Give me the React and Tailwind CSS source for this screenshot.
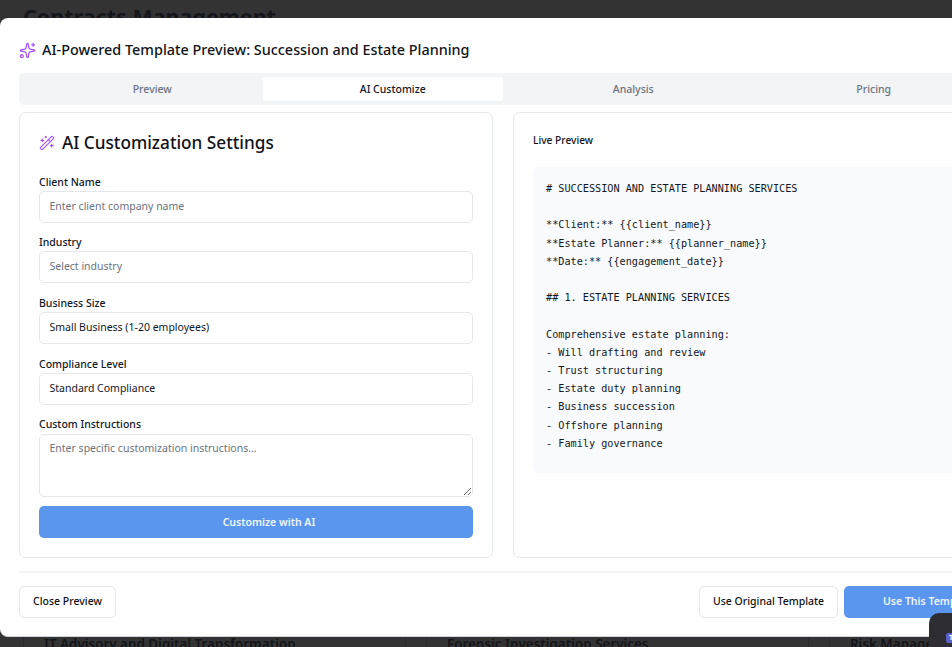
import React from "react";
import { Sparkles, WandSparkles } from "lucide-react";

const sans = { fontFamily: '"Noto Sans", sans-serif' };

const fields = [
  { label: "Client Name", text: "Enter client company name", muted: true },
  { label: "Industry", text: "Select industry", muted: true },
  { label: "Business Size", text: "Small Business (1-20 employees)" },
  { label: "Compliance Level", text: "Standard Compliance" },
];

const previewText = `# SUCCESSION AND ESTATE PLANNING SERVICES

**Client:** {{client_name}}
**Estate Planner:** {{planner_name}}
**Date:** {{engagement_date}}

## 1. ESTATE PLANNING SERVICES

Comprehensive estate planning:
- Will drafting and review
- Trust structuring
- Estate duty planning
- Business succession
- Offshore planning
- Family governance`;

const tabs = ["Preview", "AI Customize", "Analysis", "Pricing"];

const Field = ({ label, text, muted }) => (
  <div className="mb-[10.75px]">
    <div className="h-[16px] mb-[2px] text-[10.5px] leading-[18px] font-medium text-[#111827]">{label}</div>
    <div className={`h-[32px] px-[9.5px] flex items-center border border-[#e5e7eb] rounded-[5px] text-[10.5px] ${muted ? "text-[#6b7280]" : "text-[#111827]"}`}>
      {text}
    </div>
  </div>
);

const App = () => {
  return (
    <div className="relative w-full h-screen overflow-hidden bg-[#333333] text-[#0f1115] flex flex-col justify-between" style={sans}>
      {/* page behind the dialog */}
      <h1 className="pl-[23px] pt-[1px] text-[21.5px] leading-[32px] font-bold text-[#15171b]">Contracts Management</h1>
      <div className="flex pl-[23px] gap-[20px] h-[13px] overflow-visible">
        {["IT Advisory and Digital Transformation", "Forensic Investigation Services", "Risk Management"].map((t) => (
          <div key={t} className="w-[383px] shrink-0 pl-[20px] h-[13px] border-x border-[#2b2b2b] text-[13.4px] leading-[20px] font-semibold text-[#141518] whitespace-nowrap">
            {t}
          </div>
        ))}
      </div>

      {/* dialog */}
      <div className="absolute left-0 top-[18px] w-[1008px] h-[619px] px-[19px] bg-white rounded-[8px] border-b border-[#d1d5db]">
        <div className="h-[55px] pt-[9px] flex items-center gap-[6px]">
          <Sparkles className="w-[17px] h-[17px] text-[#a855f7]" strokeWidth={1.8} />
          <h2 className="text-[14.4px] leading-[20px] font-medium text-[#111318]">
            AI-Powered Template Preview: Succession and Estate Planning
          </h2>
        </div>

        <div className="grid grid-cols-4 h-[32px] pl-[3px] pr-[5px] py-[4px] bg-[#f3f4f6] rounded-[5px]">
          {tabs.map((t) => (
            <div
              key={t}
              className={`flex items-center justify-center pl-[20px] pt-[1px] rounded-[3px] text-[10.5px] font-medium ${t === "AI Customize" ? "bg-white text-[#111827]" : "text-[#6b7280]"}`}
            >
              {t}
            </div>
          ))}
        </div>

        <div className="grid grid-cols-[474px_1fr] gap-[20px] mt-[7px]">
          {/* settings */}
          <div className="h-[446px] px-[19px] pt-[20px] border border-[#e5e7eb] rounded-[7px]">
            <div className="h-[20px] mb-[19.6px] flex items-center gap-[7px]">
              <WandSparkles className="w-[16px] h-[16px] text-[#a855f7]" strokeWidth={1.8} />
              <h3 className="text-[17.2px] leading-[20px] font-medium text-[#111318]">AI Customization Settings</h3>
            </div>
            {fields.map((f) => (
              <Field key={f.label} {...f} />
            ))}
            <div className="h-[16px] mb-[2px] text-[10.5px] leading-[16px] font-medium text-[#111827]">Custom Instructions</div>
            <textarea
              readOnly
              placeholder="Enter specific customization instructions..."
              className="block w-full h-[63px] px-[9.5px] py-[5px] border border-[#e5e7eb] rounded-[5px] text-[10.5px] leading-[17px] placeholder:text-[#6b7280] outline-none"
            />
            <button className="block w-full h-[32px] mt-[9.4px] pl-[26px] pt-[1px] bg-[#5b96ee] rounded-[5px] text-[10.5px] font-semibold text-[#eef4fe]">
              Customize with AI
            </button>
          </div>

          {/* live preview */}
          <div className="h-[446px] px-[19px] pt-[19px] border border-[#e5e7eb] rounded-[7px]">
            <div className="h-[17px] mb-[18px] text-[10.2px] leading-[17px] font-medium text-[#111318]">Live Preview</div>
            <pre
              className="h-[306px] px-[13px] pt-[13px] bg-[#f9fafb] rounded-[5px] text-[10.2px] leading-[18.2px] text-[#111827]"
              style={{ fontFamily: '"DejaVu Sans Mono", monospace' }}
            >
              {previewText}
            </pre>
          </div>
        </div>

        <div className="mt-[13px] pt-[13px] border-t-2 border-[#f3f4f6] flex justify-between">
          <button className="h-[32px] w-[97px] border border-[#e5e7eb] rounded-[5px] text-[10.5px] font-medium text-[#0f1115]">
            Close Preview
          </button>
          <div className="flex gap-[6px]">
            <button className="h-[32px] w-[139px] border border-[#e5e7eb] rounded-[5px] text-[10.5px] font-medium text-[#0f1115]">
              Use Original Template
            </button>
            <button className="h-[32px] w-[145px] pl-[26px] bg-[#5b96ee] rounded-[5px] text-[10.5px] font-semibold text-[#eef4fe]">
              Use This Template
            </button>
          </div>
        </div>
      </div>

      {/* floating chat widget */}
      <div className="absolute left-[929px] top-[613px] w-[40px] h-[40px] bg-[#2d2d33] rounded-[10px]">
        <div className="absolute left-[17px] top-[20px] w-[10px] h-[10px] bg-[#5b5fc7] rounded-[2px] text-white text-[7px] leading-[10px] font-bold text-center">T</div>
      </div>
    </div>
  );
};

export default App;
